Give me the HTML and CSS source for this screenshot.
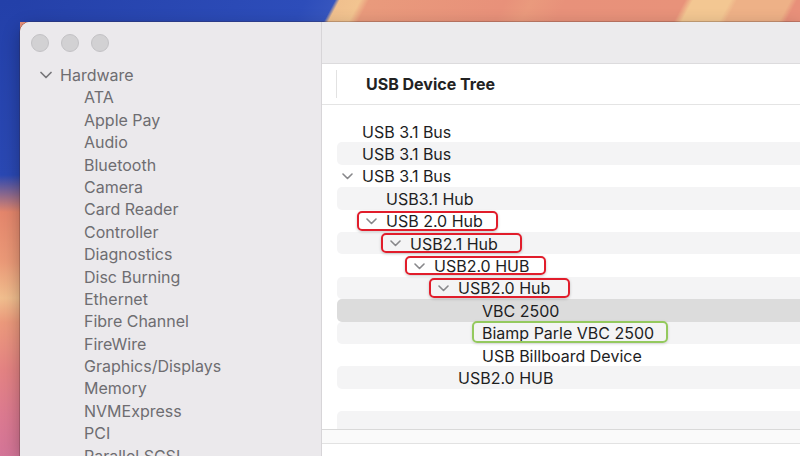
FILE: index.html
```html
<!DOCTYPE html>
<html lang="en">
<head>
<meta charset="utf-8">
<title>System Information – USB Device Tree</title>
<link rel="stylesheet" href="styles.css">
</head>
<body>
<div class="window">
  <aside class="sidebar">
    <div class="titlebar">
      <span class="light"></span><span class="light"></span><span class="light"></span>
    </div>
    <ul class="side-list">
      <li class="side-group">
        <svg class="side-chev" viewBox="0 0 12 8" width="12" height="8"><path d="M1 1.5 L6 6.5 L11 1.5"/></svg>
        <span>Hardware</span>
      </li>
      <li class="side-item">ATA</li>
      <li class="side-item">Apple Pay</li>
      <li class="side-item">Audio</li>
      <li class="side-item">Bluetooth</li>
      <li class="side-item">Camera</li>
      <li class="side-item">Card Reader</li>
      <li class="side-item">Controller</li>
      <li class="side-item">Diagnostics</li>
      <li class="side-item">Disc Burning</li>
      <li class="side-item">Ethernet</li>
      <li class="side-item">Fibre Channel</li>
      <li class="side-item">FireWire</li>
      <li class="side-item">Graphics/Displays</li>
      <li class="side-item">Memory</li>
      <li class="side-item">NVMExpress</li>
      <li class="side-item">PCI</li>
      <li class="side-item">Parallel SCSI</li>
    </ul>
  </aside>
  <main class="main">
    <div class="toolbar"></div>
    <div class="header">
      <span class="col-div"></span>
      <span class="title">USB Device Tree</span>
    </div>
    <div class="tree">
      <div class="row l0"><span class="lbl"><span class="tw"></span>USB 3.1 Bus</span></div>
      <div class="row l0 stripe"><span class="lbl"><span class="tw"></span>USB 3.1 Bus</span></div>
      <div class="row l0"><span class="lbl"><span class="tw"><svg class="chev" viewBox="0 0 11 7" width="11" height="7"><path d="M1 1 L5.5 5.5 L10 1"/></svg></span>USB 3.1 Bus</span></div>
      <div class="row l1 stripe"><span class="lbl"><span class="tw"></span>USB3.1 Hub</span></div>
      <div class="row l1"><span class="lbl red"><span class="tw"><svg class="chev" viewBox="0 0 11 7" width="11" height="7"><path d="M1 1 L5.5 5.5 L10 1"/></svg></span>USB 2.0 Hub</span></div>
      <div class="row l2 stripe"><span class="lbl red"><span class="tw"><svg class="chev" viewBox="0 0 11 7" width="11" height="7"><path d="M1 1 L5.5 5.5 L10 1"/></svg></span>USB2.1 Hub</span></div>
      <div class="row l3"><span class="lbl red"><span class="tw"><svg class="chev" viewBox="0 0 11 7" width="11" height="7"><path d="M1 1 L5.5 5.5 L10 1"/></svg></span>USB2.0 HUB</span></div>
      <div class="row l4 stripe"><span class="lbl red"><span class="tw"><svg class="chev" viewBox="0 0 11 7" width="11" height="7"><path d="M1 1 L5.5 5.5 L10 1"/></svg></span>USB2.0 Hub</span></div>
      <div class="row l5 selected"><span class="lbl"><span class="tw"></span>VBC 2500</span></div>
      <div class="row l5 stripe"><span class="lbl green"><span class="tw"></span>Biamp Parle VBC 2500</span></div>
      <div class="row l5"><span class="lbl"><span class="tw"></span>USB Billboard Device</span></div>
      <div class="row l4 stripe"><span class="lbl"><span class="tw"></span>USB2.0 HUB</span></div>
      <div class="row"></div>
      <div class="row stripe"></div>
    </div>
    <div class="footer"></div>
  </main>
</div>
</body>
</html>
```

FILE: styles.css
```css
html, body {
  margin: 0;
  padding: 0;
}

body {
  width: 800px;
  height: 456px;
  overflow: hidden;
  font-family: "Inter", "Liberation Sans", sans-serif;
  font-size: 16px;
  background-color: #e8907a;
  background-image:
    linear-gradient(to bottom, #2340a9 0px, #2a48b3 175px, #e4866c 212px, #eb9a78 262px, #f1be8e 298px, #ec9a7c 322px, #e48383 370px, #dc7a90 415px, #d47598 456px),
    linear-gradient(118deg, #2440a8 5px, #2d4dba 270px, #3655be 296px, #f0c08e 300px, #f2c490 318px, #e99a7c 326px, #e8917a 447px, #ea9a7d 470px, #e8917a 500px, #e8927a 605px, #f3c792 612px, #f3c792 645px, #eeb187 651px, #eeb187 698px, #e8907a 704px);
  background-size: 20px 100%, 100% 22px;
  background-repeat: no-repeat;
  background-position: left top, left top;
}

.window {
  margin: 22px 0 0 20px;
  width: 780px;
  height: 434px;
  display: flex;
  border-radius: 10px 0 0 0;
  overflow: hidden;
  background: #ffffff;
  box-shadow: 0 0 0 0.5px rgba(60, 30, 30, 0.45), 0 6px 18px rgba(0, 0, 0, 0.3);
}

/* ---------- sidebar ---------- */
.sidebar {
  width: 301px;
  flex: none;
  overflow: hidden;
  background: #ebe9ec;
  border-right: 1px solid #d7d5d8;
  color: #6e6d71;
}

.titlebar {
  height: 42px;
  box-sizing: border-box;
  padding: 12px 0 0 11px;
  display: flex;
  gap: 12px;
}

.light {
  width: 18px;
  height: 18px;
  box-sizing: border-box;
  border-radius: 50%;
  background: #d2d1d3;
  border: 0.5px solid #c3c2c5;
}

.side-list {
  list-style: none;
  margin: 0;
  padding: 0;
}

.side-list li {
  height: 22.4px;
  line-height: 22.4px;
  white-space: nowrap;
}

.side-group {
  display: flex;
  align-items: center;
  padding-left: 20px;
}

.side-chev {
  width: 12px;
  height: 8px;
  margin-right: 8px;
  fill: none;
  stroke: #77767a;
  stroke-width: 1.7;
  stroke-linecap: round;
  stroke-linejoin: round;
}

.side-item {
  padding-left: 64px;
}

/* ---------- main ---------- */
.main {
  flex: 1;
  display: flex;
  flex-direction: column;
  min-width: 0;
  overflow: hidden;
  background: #ffffff;
}

.toolbar {
  height: 41px;
  flex: none;
  background: #ecebed;
  border-bottom: 1px solid #dcdbdd;
}

.header {
  height: 40px;
  flex: none;
  display: flex;
  align-items: center;
  border-bottom: 1px solid #e4e4e4;
}

.col-div {
  width: 1px;
  height: 28px;
  margin-left: 14px;
  background: #e2e2e2;
}

.title {
  margin-left: 29px;
  font-weight: 700;
  color: #222222;
}

.tree {
  height: 324px;
  flex: none;
  box-sizing: border-box;
  padding-top: 15px;
  overflow: hidden;
  color: #1e1e1f;
}

.row {
  height: 22.4px;
  margin-left: 15px;
  display: flex;
  align-items: stretch;
  border-radius: 5px 0 0 5px;
  white-space: nowrap;
}

.row.stripe { background: #f4f4f5; }
.row.selected { background: #dcdcdc; }

.l0 { padding-left: 5px; }
.l1 { padding-left: 29px; }
.l2 { padding-left: 53px; }
.l3 { padding-left: 77px; }
.l4 { padding-left: 101px; }
.l5 { padding-left: 125px; }

.lbl {
  position: relative;
  display: flex;
  align-items: center;
  padding-top: 1px;
}

.tw {
  width: 20px;
  flex: none;
  display: flex;
  align-items: center;
}

.chev {
  width: 11px;
  height: 7px;
  fill: none;
  stroke: #88888b;
  stroke-width: 1.6;
  stroke-linecap: round;
  stroke-linejoin: round;
}

.lbl.red::after {
  content: "";
  position: absolute;
  left: -9.5px;
  top: 1.5px;
  width: 141px;
  height: 19.5px;
  box-sizing: border-box;
  border: 2px solid #e11d2b;
  border-radius: 5px;
  box-shadow: 0 1px 3px rgba(0, 0, 0, 0.22);
}

.lbl.green::after {
  content: "";
  position: absolute;
  left: 9.7px;
  top: -0.9px;
  width: 196px;
  height: 22.6px;
  box-sizing: border-box;
  border: 2px solid #94c95e;
  border-radius: 5px;
  box-shadow: 0 1px 3px rgba(0, 0, 0, 0.15);
}

.footer {
  height: 13px;
  flex: none;
  background: #fafafa;
  border-top: 1px solid #d9d9d9;
  border-bottom: 1px solid #e2e2e2;
}
```
